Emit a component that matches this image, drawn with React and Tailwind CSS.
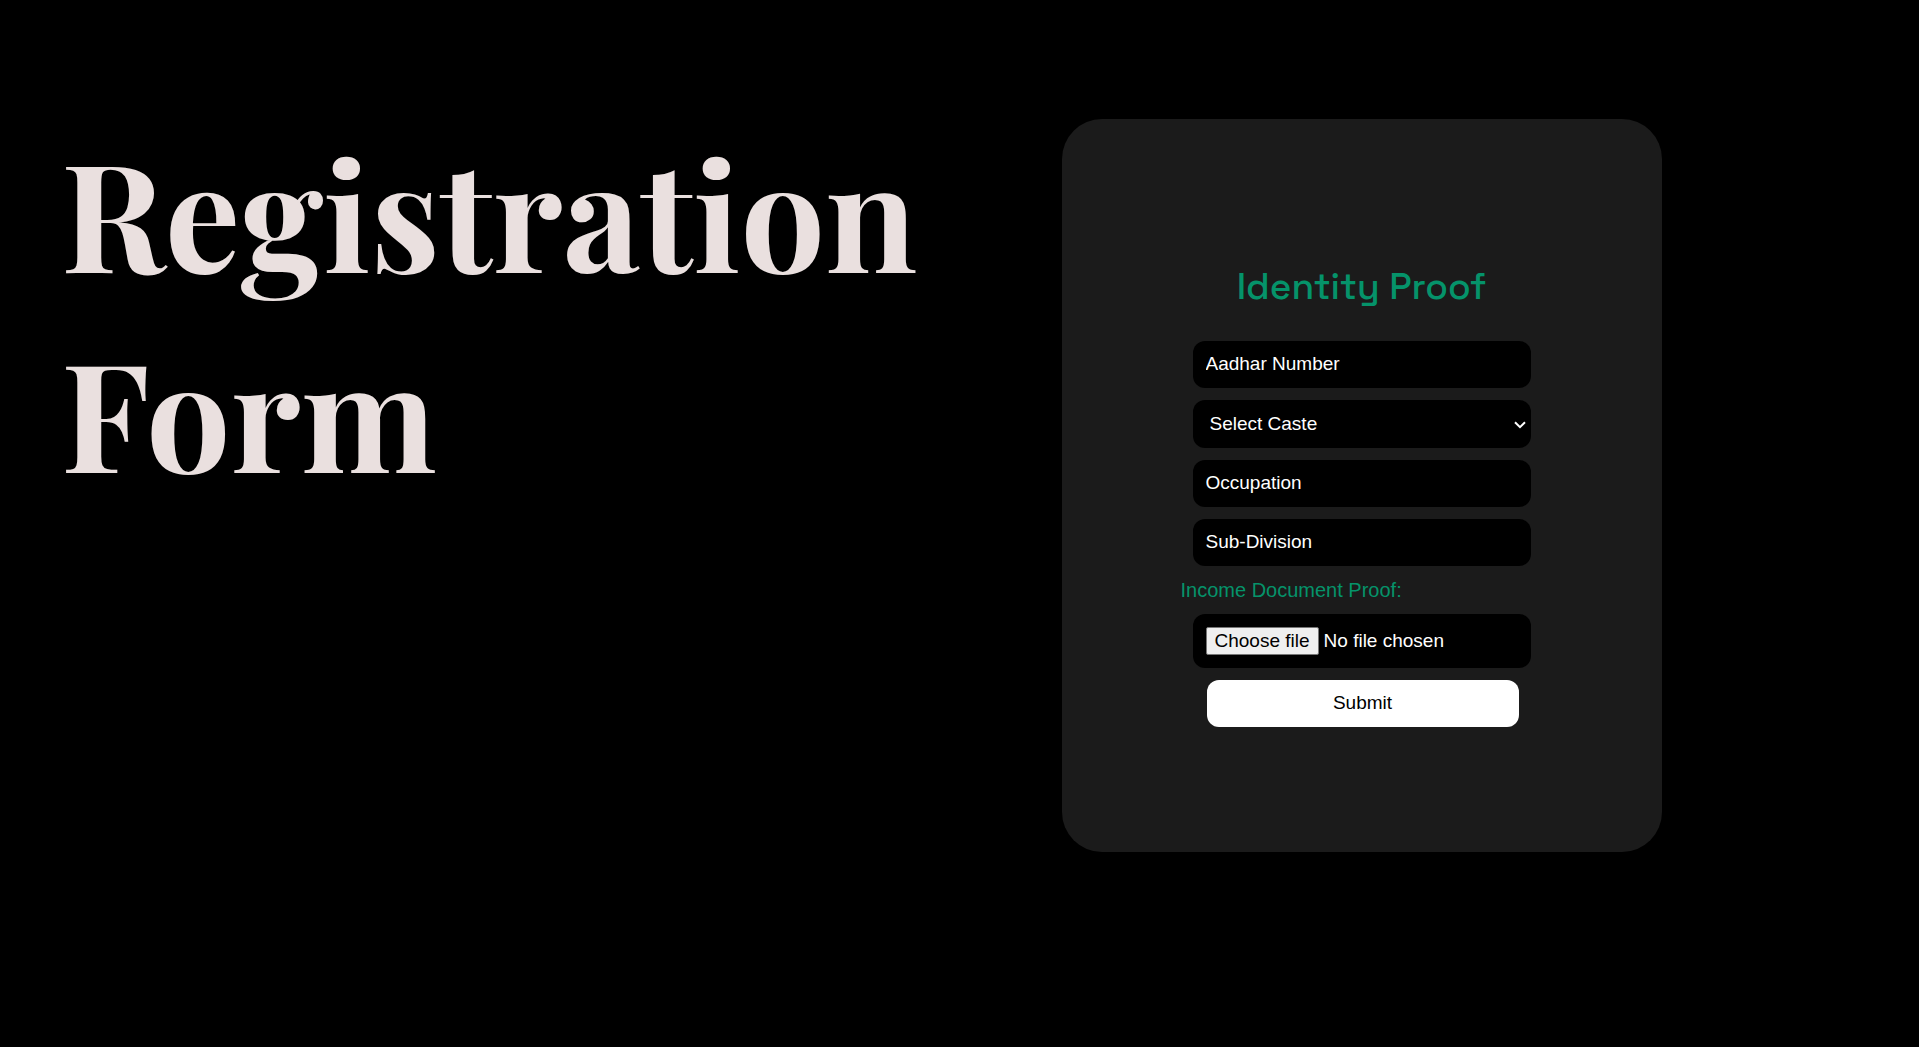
import { useState } from "react";

const field =
  "block w-full rounded-xl bg-black text-[19px] leading-6 text-white outline-none placeholder:text-white placeholder:opacity-100";

function TextField({ name, label }) {
  return (
    <input
      type="text"
      name={name}
      aria-label={label}
      placeholder={label}
      className={`${field} h-[47px] px-[13px] pt-[11px] pb-3`}
    />
  );
}

export default function App() {
  const [fileName, setFileName] = useState("No file chosen");

  return (
    <main className="grid min-h-screen grid-cols-2 items-start bg-black font-['Liberation_Sans',Arial,sans-serif]">
      <h1 className="pt-[111px] pl-[61px] font-['Playfair_Display','Liberation_Serif',serif] text-[150px] leading-[200px] font-bold text-[#eae0df]">
        Registration Form
      </h1>

      <section className="mt-[119px] ml-[102px] max-w-[600px] rounded-[40px] bg-[#1b1b1b] pt-[142px] pb-[125px]">
        <form
          className="mx-auto flex w-[338px] flex-col gap-3"
          onSubmit={(event) => event.preventDefault()}
        >
          <h2 className="mb-[17px] text-center font-['Space_Grotesk',Inter,sans-serif] text-[37px] leading-[51px] font-medium whitespace-nowrap text-[#05936a]">
            Identity Proof
          </h2>

          <TextField name="aadhar" label="Aadhar Number" />
          <div className="relative">
            <select
              name="caste"
              aria-label="Select Caste"
              defaultValue=""
              className={`${field} h-12 appearance-none pr-6 pl-[17px]`}
            >
              <option value="">Select Caste</option>
              <option value="general">General</option>
              <option value="obc">OBC</option>
              <option value="sc">SC</option>
              <option value="st">ST</option>
            </select>
            <svg
              viewBox="0 0 12 8"
              className="pointer-events-none absolute top-[21px] right-[5px] h-2 w-3"
              fill="none"
              stroke="white"
              strokeWidth="2"
              aria-hidden="true"
            >
              <path d="M1 1.2 6 6.2 11 1.2" />
            </svg>
          </div>
          <TextField name="occupation" label="Occupation" />
          <TextField name="subdivision" label="Sub-Division" />

          <label
            htmlFor="income-proof"
            className="-ml-3 text-[20px] leading-6 text-[#05936a]"
          >
            Income Document Proof:
          </label>
          <label className="flex h-[54px] items-center gap-[5px] rounded-xl bg-black px-[13px] text-[19px] text-white">
            <input
              id="income-proof"
              type="file"
              className="sr-only"
              onChange={(event) =>
                setFileName(event.target.files[0]?.name ?? "No file chosen")
              }
            />
            <span className="rounded-xs border border-[#767676] bg-[#efefef] px-2 leading-[26px] text-black">
              Choose file
            </span>
            <span className="truncate">{fileName}</span>
          </label>

          <button
            type="submit"
            className="mr-3 ml-3.5 h-[47px] rounded-xl bg-white text-[19px] text-black"
          >
            Submit
          </button>
        </form>
      </section>
    </main>
  );
}
